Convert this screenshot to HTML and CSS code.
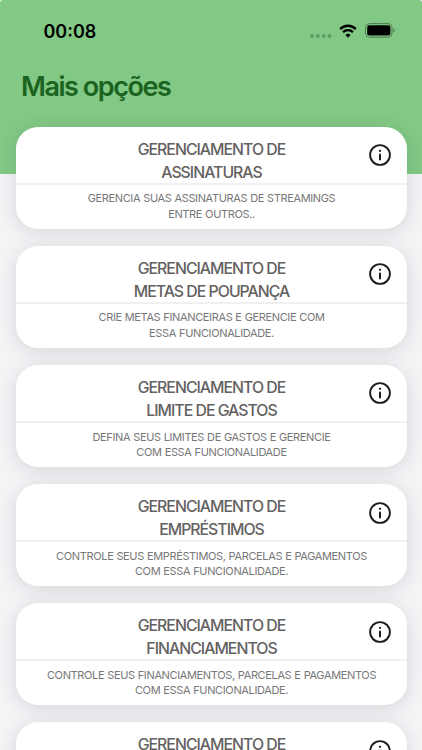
FILE: index.html
```html
<!DOCTYPE html>
<html lang="pt-BR">
<head>
  <meta charset="UTF-8">
  <meta name="viewport" content="width=device-width, initial-scale=1.0">
  <title>Mais opções</title>
  <link rel="stylesheet" href="styles.css">
</head>
<body>

  <!-- info icon shared by all the cards -->
  <svg class="sprite" width="0" height="0">
    <symbol id="info" viewBox="0 0 24 24">
      <circle cx="12" cy="12" r="9.9" fill="none" stroke="#1c1c1c" stroke-width="1.9"/>
      <circle cx="12" cy="7.8" r="1.15" fill="#1c1c1c"/>
      <path d="M12 11.6V16.4" stroke="#1c1c1c" stroke-width="2" stroke-linecap="round"/>
    </symbol>
  </svg>

  <header class="header">
    <div class="status-bar">
      <span class="time">00:08</span>
      <div class="status-icons">
        <svg class="signal" width="22" height="4" viewBox="0 0 22 4">
          <circle cx="2" cy="2" r="1.9"/>
          <circle cx="7.8" cy="2" r="1.9"/>
          <circle cx="13.6" cy="2" r="1.9"/>
          <circle cx="19.4" cy="2" r="1.9"/>
        </svg>
        <svg class="wifi" width="18" height="14" viewBox="0 0 18 14">
          <path d="M1.2 5A11.2 11.2 0 0 1 16.8 5" fill="none" stroke="#000" stroke-width="2.5"/>
          <path d="M4 8.2A7.2 7.2 0 0 1 14 8.2" fill="none" stroke="#000" stroke-width="2.3"/>
          <path d="M6.4 10.9A3.8 3.8 0 0 1 11.6 10.9L9 13.7Z"/>
        </svg>
        <svg class="battery" width="30" height="15" viewBox="0 0 30 15">
          <rect x="0.6" y="0.6" width="26.4" height="13.6" rx="4" fill="none" stroke="#4c794f" stroke-width="1"/>
          <rect x="2.2" y="2.2" width="23.2" height="10.4" rx="2.4"/>
          <path d="M28.3 5.4V9.4Q29.7 8.7 29.7 7.4T28.3 5.4Z" fill="#4c794f"/>
        </svg>
      </div>
    </div>
    <h1>Mais opções</h1>
  </header>

  <main class="cards">
    <section class="card">
      <div class="card-header">
        <h2>GERENCIAMENTO DE<br>ASSINATURAS</h2>
        <svg class="info"><use href="#info"/></svg>
      </div>
      <p>GERENCIA SUAS ASSINATURAS DE STREAMINGS<br>ENTRE OUTROS..</p>
    </section>

    <section class="card">
      <div class="card-header">
        <h2>GERENCIAMENTO DE<br>METAS DE POUPANÇA</h2>
        <svg class="info"><use href="#info"/></svg>
      </div>
      <p>CRIE METAS FINANCEIRAS E GERENCIE COM<br>ESSA FUNCIONALIDADE.</p>
    </section>

    <section class="card">
      <div class="card-header">
        <h2>GERENCIAMENTO DE<br>LIMITE DE GASTOS</h2>
        <svg class="info"><use href="#info"/></svg>
      </div>
      <p>DEFINA SEUS LIMITES DE GASTOS E GERENCIE<br>COM ESSA FUNCIONALIDADE</p>
    </section>

    <section class="card">
      <div class="card-header">
        <h2>GERENCIAMENTO DE<br>EMPRÉSTIMOS</h2>
        <svg class="info"><use href="#info"/></svg>
      </div>
      <p>CONTROLE SEUS EMPRÉSTIMOS, PARCELAS E PAGAMENTOS<br>COM ESSA FUNCIONALIDADE.</p>
    </section>

    <section class="card">
      <div class="card-header">
        <h2>GERENCIAMENTO DE<br>FINANCIAMENTOS</h2>
        <svg class="info"><use href="#info"/></svg>
      </div>
      <p>CONTROLE SEUS FINANCIAMENTOS, PARCELAS E PAGAMENTOS<br>COM ESSA FUNCIONALIDADE.</p>
    </section>

    <section class="card">
      <div class="card-header">
        <h2>GERENCIAMENTO DE</h2>
        <svg class="info"><use href="#info"/></svg>
      </div>
    </section>
  </main>

</body>
</html>
```

FILE: styles.css
```css
* {
  box-sizing: border-box;
  margin: 0;
  padding: 0;
}

body {
  height: 100vh;
  overflow: hidden;
  background: #f3f4f6;
  font-family: Inter, "Liberation Sans", sans-serif;
}

.sprite {
  display: block;
}

.header {
  height: 174px;
  padding: 20px 27px 0 21px;
  background: #82c985;
  border-radius: 3px 3px 0 0;
}

.status-bar {
  display: flex;
  justify-content: space-between;
  height: 22px;
  padding-left: 22.5px;
}

.time {
  font-size: 18px;
  font-weight: 600;
  line-height: 23px;
  color: #000;
}

.status-icons {
  display: flex;
  align-items: center;
  height: 21px;
}

.signal {
  margin-top: 10px;
  fill: #5f9b62;
}

.wifi {
  margin-left: 7px;
}

.battery {
  margin-left: 8px;
}

.header h1 {
  margin-top: 28px;
  font-size: 27px;
  font-weight: 600;
  line-height: 34px;
  letter-spacing: -1.45px;
  color: #1b6320;
}

.cards {
  display: flex;
  flex-direction: column;
  gap: 17px;
  margin-top: -47px;
  padding: 0 15px 0 16px;
}

.card {
  flex: none;
  height: 102.1px;
  background: #fff;
  border-radius: 22px;
  box-shadow: 0 3px 18px rgba(60, 62, 70, 0.16);
  text-align: center;
}

.card-header {
  position: relative;
  height: 58px;
  padding-top: 12px;
  border-bottom: 2px solid #f0f0f0;
}

.card h2 {
  font-size: 15.8px;
  font-weight: 550;
  line-height: 22.5px;
  letter-spacing: -0.97px;
  color: #646161;
}

.info {
  position: absolute;
  top: 16.3px;
  right: 15px;
  width: 24px;
  height: 24px;
}

.card p {
  padding-top: 6.4px;
  font-size: 11px;
  line-height: 15.6px;
  letter-spacing: -0.36px;
  word-spacing: 0.3px;
  color: #777;
}
```
